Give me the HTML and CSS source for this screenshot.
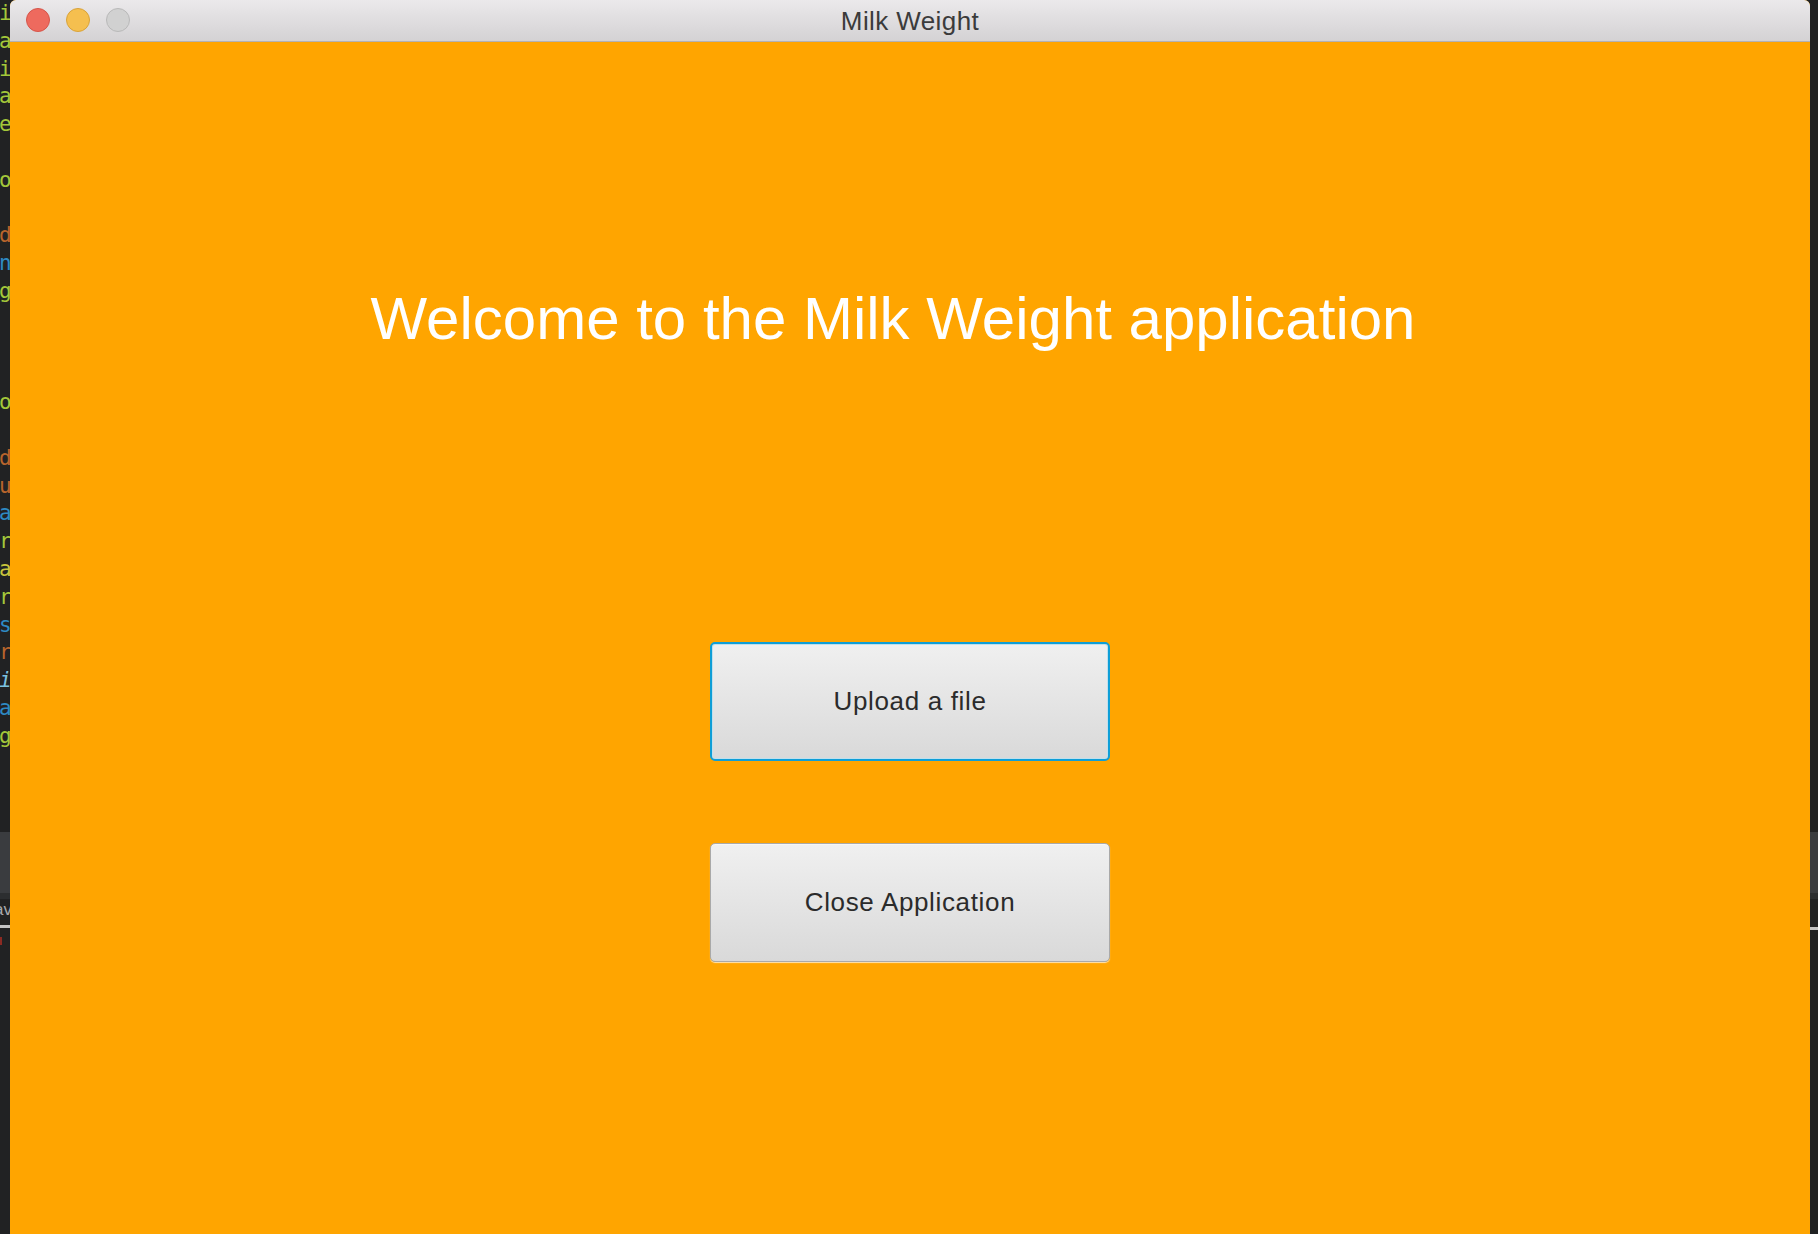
FILE: index.html
```html
<!DOCTYPE html>
<html>
<head>
<meta charset="utf-8">
<title>Milk Weight</title>
<link rel="stylesheet" href="styles.css">
</head>
<body>
<div class="screen">
  <div class="side side-left">
    <div class="code">
      <div class="ln g">i</div>
      <div class="ln g">a</div>
      <div class="ln g">i</div>
      <div class="ln g">a</div>
      <div class="ln g">e</div>
      <div class="ln"></div>
      <div class="ln g">o</div>
      <div class="ln"></div>
      <div class="ln o">d</div>
      <div class="ln b">n</div>
      <div class="ln g">g</div>
      <div class="ln"></div>
      <div class="ln"></div>
      <div class="ln"></div>
      <div class="ln g">o</div>
      <div class="ln"></div>
      <div class="ln o">d</div>
      <div class="ln o">u</div>
      <div class="ln b">a</div>
      <div class="ln g">r</div>
      <div class="ln y">a</div>
      <div class="ln g">r</div>
      <div class="ln b">s</div>
      <div class="ln o">r</div>
      <div class="ln lb it">i</div>
      <div class="ln b">a</div>
      <div class="ln g">g</div>
    </div>
    <div class="panel"></div>
    <div class="panel-edge"></div>
    <div class="tab-text">av</div>
    <div class="rule"></div>
    <div class="red-mark"></div>
  </div>

  <div class="window">
    <div class="titlebar">
      <div class="lights">
        <span class="light red"></span>
        <span class="light yellow"></span>
        <span class="light gray"></span>
      </div>
      <div class="title">Milk Weight</div>
    </div>
    <div class="content">
      <h1 class="welcome">Welcome to the Milk Weight application</h1>
      <button class="btn btn-focus">Upload a file</button>
      <button class="btn btn-close">Close Application</button>
    </div>
  </div>

  <div class="side side-right">
    <div class="spacer"></div>
    <div class="panel"></div>
    <div class="panel-edge"></div>
    <div class="gap"></div>
    <div class="rule"></div>
  </div>
</div>
</body>
</html>
```

FILE: styles.css
```css
html, body {
  margin: 0;
  padding: 0;
  background: #202122;
}

.screen {
  display: flex;
  width: 1818px;
  height: 1234px;
  overflow: hidden;
}

.side {
  background: #212223;
  display: flex;
  flex-direction: column;
  overflow: hidden;
  flex-shrink: 0;
}

.side-left {
  width: 10px;
}

.side-right {
  width: 8px;
}

.code {
  font-family: "DejaVu Sans Mono", "Liberation Mono", monospace;
  font-size: 21px;
  height: 752px;
  flex-shrink: 0;
  margin-left: -1px;
}

.ln {
  height: 27.8px;
  line-height: 27.8px;
}

.g { color: #a4c83a; }
.o { color: #b8652c; }
.b { color: #2e8ac4; }
.y { color: #c9c53c; }
.lb { color: #7cc2e0; }
.it { font-style: italic; }

.side-left .panel {
  margin-top: 80px;
}

.panel {
  height: 61px;
  flex-shrink: 0;
  background: #3a3c3f;
}

.panel-edge {
  height: 6px;
  flex-shrink: 0;
  background: #2c2e30;
}

.tab-text {
  font-family: "Liberation Sans", Arial, sans-serif;
  font-size: 17px;
  color: #a9abad;
  line-height: 22px;
  margin-left: -6px;
  height: 26px;
  flex-shrink: 0;
}

.rule {
  height: 3px;
  flex-shrink: 0;
  background: #c4c4c4;
}

.red-mark {
  margin-top: 9px;
  width: 2px;
  height: 8px;
  flex-shrink: 0;
  background: #8c2a22;
}

.side-right .spacer {
  height: 832px;
  flex-shrink: 0;
}

.side-right .gap {
  height: 28px;
  flex-shrink: 0;
}

.window {
  width: 1800px;
  flex-shrink: 0;
  display: flex;
  flex-direction: column;
  background: #ffa500;
  border-radius: 6px 6px 0 0;
  overflow: hidden;
}

.titlebar {
  height: 41px;
  border-bottom: 1px solid #b3b1b3;
  background: linear-gradient(#ebe9eb, #d4d2d4);
  position: relative;
  display: flex;
  align-items: center;
  justify-content: center;
}

.lights {
  position: absolute;
  left: 16px;
  top: 8px;
  display: flex;
  gap: 16px;
}

.light {
  width: 22px;
  height: 22px;
  border-radius: 50%;
  border: 1px solid;
  display: block;
}

.light.red {
  background: #ee6a5e;
  border-color: #d6554a;
}

.light.yellow {
  background: #f5bf4f;
  border-color: #d9a33a;
}

.light.gray {
  background: #d1d1d1;
  border-color: #b9b9b9;
}

.title {
  font-family: "Liberation Sans", Arial, sans-serif;
  font-size: 26px;
  letter-spacing: 0.4px;
  color: #3b3b3b;
  line-height: 30px;
}

.content {
  flex: 1;
  display: flex;
  flex-direction: column;
  align-items: center;
}

.welcome {
  margin: 242px 0 0 0;
  padding-right: 34px;
  font-family: "Liberation Sans", Arial, sans-serif;
  font-weight: normal;
  font-size: 60px;
  line-height: 69px;
  color: #ffffff;
  text-align: center;
}

.btn {
  width: 400px;
  height: 119px;
  border-radius: 5px;
  background: linear-gradient(#f0f0f0, #d9d9d9);
  font-family: "Liberation Sans", Arial, sans-serif;
  font-size: 26px;
  letter-spacing: 0.65px;
  color: #2b2b2b;
  padding: 0;
  box-sizing: border-box;
}

.btn-focus {
  margin-top: 289px;
  border: 2px solid #0f9ed6;
  box-shadow: inset 0 0 0 1px #bfe0ee;
}

.btn-close {
  margin-top: 82px;
  border: 1px solid #a9a9a9;
  box-shadow: 0 1px 1px rgba(255, 255, 255, 0.7), inset 0 1px 0 #f6f6f6;
}
```
